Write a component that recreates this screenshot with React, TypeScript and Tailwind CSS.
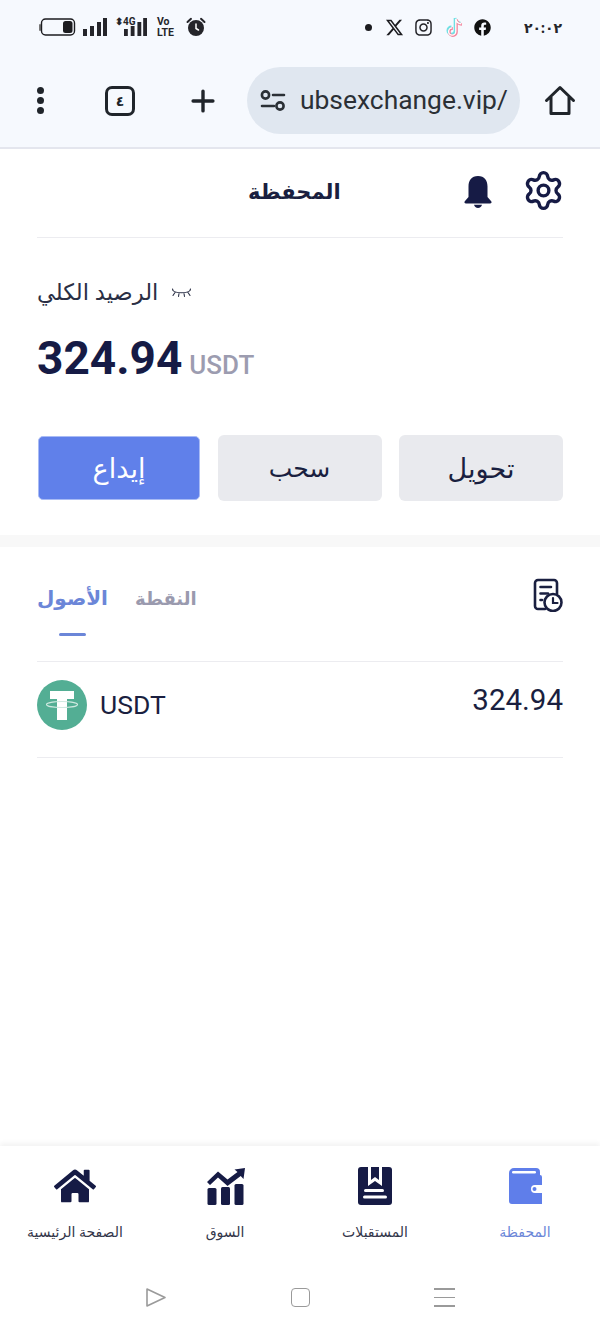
import React from 'react';
import { FaHome, FaFacebook, FaInstagram } from 'react-icons/fa';
import { FaXTwitter } from 'react-icons/fa6';
import { Settings, Plus } from 'lucide-react';

const arabic = { fontFamily: '"Noto Sans", "DejaVu Sans", sans-serif' };

const BatteryIcon = () => (
  <svg width="37" height="18" viewBox="0 0 37 18" fill="none">
    <rect x="0" y="6" width="2" height="7" rx="1" fill="#777" />
    <rect x="2.5" y="1" width="33" height="16" rx="4" stroke="#1c1c20" strokeWidth="1.4" />
    <rect x="24" y="3" width="9.5" height="12" rx="2.5" fill="#1c1c20" />
  </svg>
);

const Bars = ({ width = 24 }: { width?: number }) => (
  <svg width={width} height="18" viewBox="0 0 24 18" preserveAspectRatio="none" fill="#25252a">
    <rect x="0" y="11" width="4" height="7" />
    <rect x="7" y="8" width="4" height="10" />
    <rect x="14" y="4" width="4" height="14" />
    <rect x="20" y="0" width="4" height="18" />
  </svg>
);

const AlarmIcon = () => (
  <svg width="20" height="20" viewBox="0 0 20 20">
    <circle cx="10" cy="11" r="8" fill="#25252a" />
    <path d="M1.5 5 L5 1.8 M18.5 5 L15 1.8" stroke="#25252a" strokeWidth="2" strokeLinecap="round" />
    <path d="M10 7v4.5l2.5 1.5" stroke="#fff" strokeWidth="1.5" fill="none" strokeLinecap="round" />
  </svg>
);

const TiktokIcon = () => (
  <svg width="18" height="22" viewBox="0 0 18 22" fill="none" strokeWidth="2.6">
    <path d="M9 2v12.5a3.6 3.6 0 1 1-3.6-3.6M9 2c.5 3 2.6 4.8 5.5 5" stroke="#6fe0e4" />
    <path d="M10.5 3.5V16a3.6 3.6 0 1 1-3.6-3.6M10.5 3.5c.5 3 2.6 4.8 5.5 5" stroke="#f2849c" />
    <path d="M9.8 2.8v12.7a3.6 3.6 0 1 1-3.6-3.6M9.8 2.8c.5 3 2.6 4.8 5.5 5" stroke="#fff" strokeWidth="1.4" />
  </svg>
);

const SlidersIcon = () => (
  <svg width="26" height="22" viewBox="0 0 26 22" fill="none" stroke="#2b3036" strokeWidth="2.6" strokeLinecap="round">
    <circle cx="5.5" cy="5" r="3.6" />
    <path d="M13 5h11M2 16h12" />
    <circle cx="20" cy="16" r="3.6" />
  </svg>
);

const HomeOutline = () => (
  <svg width="32" height="32" viewBox="0 0 32 32" fill="none" stroke="#20252b" strokeWidth="3" strokeLinejoin="round" strokeLinecap="round">
    <path d="M2.5 15.5 16 2.500l13.500 13M7 12v16.500h18V12" />
  </svg>
);

const BellIcon = () => (
  <svg width="28" height="32" viewBox="0 0 28 32" fill="#161b45">
    <path d="M14 0C7.500 0 4.500 4.500 4.500 10.500V21L.8 25.300C0 26.300.5 27.500 2 27.500h24c1.500 0 2-1.200 1.200-2.200L23.500 21V10.500C23.500 4.500 20.500 0 14 0z" />
    <path d="M10 28.800h8c-.3 1.800-2 3.200-4 3.200s-3.700-1.400-4-3.200z" />
  </svg>
);

const ClosedEye = () => (
  <svg width="19" height="12" viewBox="0 0 19 12" fill="none" stroke="#2a2f45" strokeWidth="1.1" strokeLinecap="round">
    <path d="M1 3.500c2.500 3 14.500 3 17 0M3 5.500 1 8.500M7 6.500 6.500 9.500M12 6.500l.5 3M16 5.500l2 3M1 3.500 .5 2M18 3.500l.5-1.500" />
  </svg>
);

const HistoryIcon = () => (
  <svg width="30" height="34" viewBox="0 0 30 34" fill="none" stroke="#1a1f40" strokeWidth="2.6" strokeLinecap="round">
    <path d="M12 31H5a3 3 0 0 1-3-3V5a3 3 0 0 1 3-3h16a3 3 0 0 1 3 3v11" />
    <path d="M7.500 9H18M7.500 15.500H15M7.500 22H9" />
    <circle cx="20" cy="24.500" r="8.500" fill="#fff" />
    <path d="M20 20v5h4.500" strokeWidth="2.200" />
  </svg>
);

const TetherLogo = () => (
  <svg width="50" height="50" viewBox="0 0 50 50" className="shrink-0">
    <circle cx="25" cy="25" r="25" fill="#53ae94" />
    <path d="M13 11h24v8h-7v21H20V19h-7z" fill="#fff" />
    <ellipse cx="25" cy="24.500" rx="15.500" ry="3" fill="none" stroke="#cfe9e0" strokeWidth="1.200" />
  </svg>
);

const ChartIcon = () => (
  <svg width="40" height="38" viewBox="0 0 40 38" fill="#161b45">
    <path d="M2 15 13 4.500l9.500 8L32.500 5l-3-2.500L40 1l-1.500 11-2.800-3L22.500 19 13 10.500 5 18z" />
    <rect x="2.500" y="21" width="9" height="17" rx="1.500" />
    <rect x="16" y="20" width="9" height="18" rx="1.500" />
    <rect x="29.500" y="17" width="9" height="21" rx="1.500" />
  </svg>
);

const BookIcon = () => (
  <svg width="34" height="38" viewBox="0 0 34 38">
    <path d="M3 0h28a3 3 0 0 1 3 3v32a3 3 0 0 1-3 3H3a3 3 0 0 1-3-3V3a3 3 0 0 1 3-3z" fill="#161b45" />
    <path d="M10 0h14v19l-7-5-7 5z" fill="#fff" />
    <path d="M13 0h8v13l-4-3-4 3z" fill="#161b45" />
    <rect x="6" y="22" width="20" height="3" rx="1.500" fill="#fff" />
    <rect x="5" y="28.500" width="24" height="3" rx="1.500" fill="#fff" />
  </svg>
);

const WalletIcon = () => (
  <svg width="33" height="36" viewBox="0 0 33 36">
    <path d="M5 0h22a4 4 0 0 1 4 4v3a2 2 0 0 1 2 2v27H3a3 3 0 0 1-3-3V5a5 5 0 0 1 5-5z" fill="#5f7eea" />
    <rect x="3" y="3" width="24" height="2.500" rx="1.200" fill="#fff" />
    <path d="M33 17h-7a4 4 0 0 0 0 8h7z" fill="#fff" />
    <circle cx="25.500" cy="21" r="2" fill="#5f7eea" />
  </svg>
);

const NavItem = ({ icon, label, active }: { icon: React.ReactNode; label: string; active?: boolean }) => (
  <div className="flex flex-col items-center">
    <div className="h-[38px] flex items-center justify-center">{icon}</div>
    <span className={`mt-[17px] text-[14px] leading-[20px] ${active ? 'text-[#6b86d8]' : 'text-[#33364a]'}`} style={arabic}>{label}</span>
  </div>
);

export default function App() {
  return (
    <div className="w-[600px] h-[1333px] flex flex-col bg-white overflow-hidden" style={{ fontFamily: 'Roboto, sans-serif' }}>
      {/* phone status bar + browser bar */}
      <div className="h-[149px] shrink-0 bg-[#f6f9fe] border-b-2 border-[#e4e6ee]">
        <div className="h-[54px] pl-[39px] pr-[38px] flex items-center justify-between">
          <div className="flex items-center">
            <BatteryIcon />
            <div className="ml-[7px]"><Bars /></div>
            <div className="ml-[8px] flex items-start">
              <span className="text-[10px] font-bold leading-[10px] text-[#25252a] w-[20px] -mt-[1px]">⬍4G</span>
              <div className="-ml-[11px]"><Bars width={23} /></div>
            </div>
            <div className="ml-[10px] w-[20px] flex flex-col gap-[1px] text-[10.500px] leading-[10px] font-bold text-[#25252a]">
              <span>Vo</span>
              <span>LTE</span>
            </div>
            <div className="ml-[9px]"><AlarmIcon /></div>
          </div>
          <div className="flex items-center">
            <span className="w-[7px] h-[7px] rounded-full bg-[#1c1c20]" />
            <FaXTwitter className="ml-[13px] text-[19px] text-[#1c1c20]" />
            <FaInstagram className="ml-[10px] text-[19px] text-[#25252a]" />
            <div className="ml-[13px]"><TiktokIcon /></div>
            <FaFacebook className="ml-[10px] text-[17px] text-[#111]" />
            <span className="ml-[33px] text-[14px] font-bold text-[#25252a]" style={arabic}>٢٠:٠٢</span>
          </div>
        </div>
        <div className="h-[67px] mt-[13px] flex items-center">
          <div className="w-[81px] flex justify-center">
            <div className="flex flex-col gap-[3px]">
              <span className="w-[7px] h-[7px] rounded-full bg-[#20252b]" />
              <span className="w-[7px] h-[7px] rounded-full bg-[#20252b]" />
              <span className="w-[7px] h-[7px] rounded-full bg-[#20252b]" />
            </div>
          </div>
          <div className="ml-[24px] w-[30px] h-[30px] rounded-[7px] border-[3px] border-[#20252b] flex items-center justify-center text-[14px] font-bold text-[#20252b]" style={arabic}>٤</div>
          <Plus size={34} strokeWidth={2.400} className="ml-[51px] text-[#20252b]" />
          <div className="ml-[27px] w-[273px] h-[67px] rounded-full bg-[#e0e7f0] flex items-center pl-[13px] overflow-hidden">
            <SlidersIcon />
            <span className="ml-[14px] text-[26.400px] text-[#2b3036] whitespace-nowrap">ubsexchange.vip/</span>
          </div>
          <div className="ml-[24px]"><HomeOutline /></div>
        </div>
      </div>

      {/* title row */}
      <div className="mx-[37px] h-[89px] shrink-0 border-b border-[#ececf0] flex items-center pb-[6px]">
        <span className="ml-[211px] pt-[4px] text-[21px] font-bold text-[#1a1f40]" style={arabic}>المحفظة</span>
        <div className="ml-auto pt-[3px]"><BellIcon /></div>
        <Settings size={43} strokeWidth={1.900} className="ml-[30px] -mr-[2px] text-[#161b45]" />
      </div>

      {/* balance */}
      <div className="px-[37px] shrink-0">
        <div className="mt-[34px] h-[40px] flex items-center gap-[14px]">
          <span className="text-[22.600px] text-[#2a2f45]" style={arabic}>الرصيد الكلي</span>
          <div className="pt-[2px]"><ClosedEye /></div>
        </div>
        <div className="mt-[16px] flex items-baseline h-[60px]">
          <span className="text-[46px] font-bold text-[#161b45] leading-[60px]">324.94</span>
          <span className="ml-[7px] text-[26px] font-medium text-[#9c9cb0]">USDT</span>
        </div>
      </div>

      {/* actions */}
      <div className="mt-[47px] pl-[38px] pr-[37px] flex items-center justify-between shrink-0">
        <button className="w-[162px] h-[64px] rounded-[5px] bg-[#6080ea] border border-[#a9bbf5] text-[27px] text-white" style={arabic}>إيداع</button>
        <button className="w-[164px] h-[66px] rounded-[6px] bg-[#e9eaee] text-[25px] text-[#1a1f40]" style={arabic}>سحب</button>
        <button className="w-[164px] h-[66px] rounded-[6px] bg-[#e9eaee] text-[27px] text-[#1a1f40]" style={arabic}>تحويل</button>
      </div>

      <div className="mt-[34px] h-[12px] shrink-0 bg-[#f8f8f8]" />

      {/* tabs */}
      <div className="mx-[37px] h-[115px] shrink-0 border-b border-[#ececf0] flex items-start">
        <div className="flex flex-col items-center pt-[31px]">
          <span className="text-[20px] leading-[40px] font-bold text-[#6b86d8]" style={arabic}>الأصول</span>
          <span className="mt-[15px] w-[27px] h-[3px] rounded-full bg-[#6b86d8]" />
        </div>
        <span className="ml-[27px] pt-[31px] text-[18px] leading-[40px] font-bold text-[#9a9aae]" style={arabic}>النقطة</span>
        <div className="ml-auto pt-[31px]"><HistoryIcon /></div>
      </div>

      {/* asset row */}
      <div className="mx-[37px] h-[96px] shrink-0 border-b border-[#ececf0] flex items-center justify-between">
        <div className="flex items-center gap-[13px] pb-[9px]">
          <TetherLogo />
          <span className="text-[26.500px] text-[#1a1f40]">USDT</span>
        </div>
        <span className="text-[29.500px] text-[#1a1f40] pb-[18px]">324.94</span>
      </div>

      {/* bottom tabs */}
      <div className="mt-auto h-[187px] shrink-0 bg-white shadow-[0_-3px_5px_rgba(0,0,0,0.05)]">
        <div className="grid grid-cols-4 pt-[21px]">
          <NavItem icon={<FaHome size={42} className="text-[#161b45]" />} label="الصفحة الرئيسية" />
          <NavItem icon={<ChartIcon />} label="السوق" />
          <NavItem icon={<BookIcon />} label="المستقبلات" />
          <NavItem icon={<WalletIcon />} label="المحفظة" active />
        </div>
        <div className="mt-[45px] flex items-center justify-center gap-[124px]">
          <svg width="21" height="21" viewBox="0 0 21 21" fill="none" stroke="#9a9a9a" strokeWidth="1.600" strokeLinejoin="round"><path d="M1 2v17l18-8.500z" /></svg>
          <span className="w-[19px] h-[19px] rounded-[4px] border-[1.500px] border-[#9a9a9a]" />
          <div className="flex flex-col gap-[7px]">
            <span className="w-[21px] h-[1.500px] bg-[#9a9a9a]" />
            <span className="w-[21px] h-[1.500px] bg-[#9a9a9a]" />
            <span className="w-[21px] h-[1.500px] bg-[#9a9a9a]" />
          </div>
        </div>
      </div>
    </div>
  );
}
